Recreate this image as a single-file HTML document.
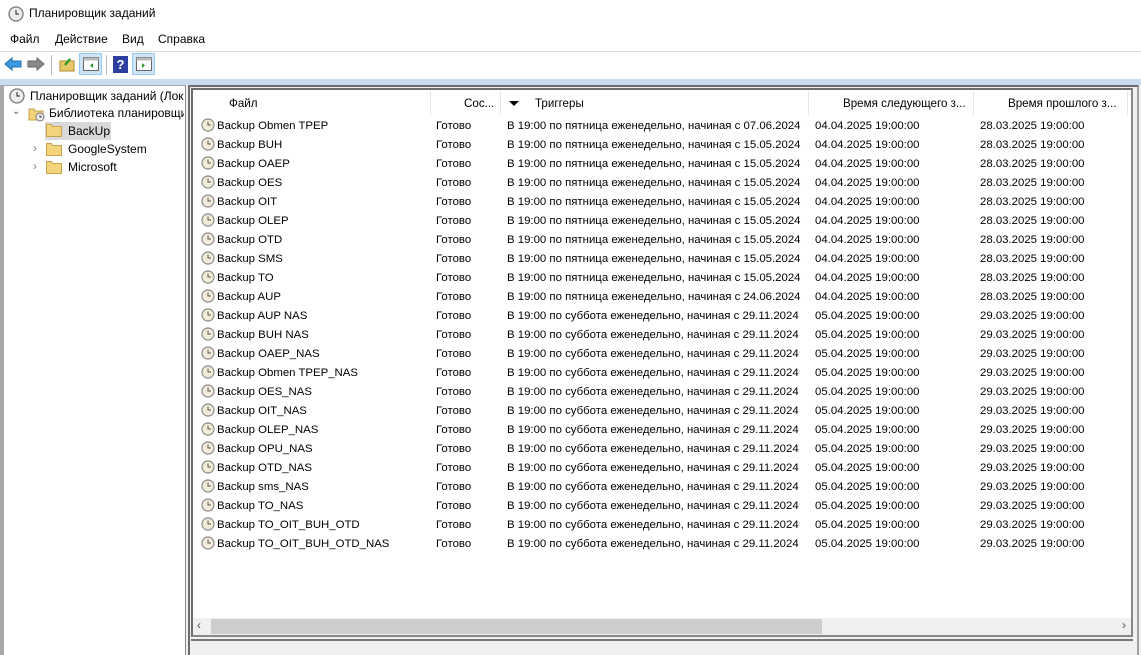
<!DOCTYPE html>
<html><head><meta charset="utf-8">
<style>
*{margin:0;padding:0;box-sizing:border-box}
body{width:1141px;height:655px;overflow:hidden;background:#fff;font-family:"Segoe UI","Liberation Sans",sans-serif;font-size:12px;color:#000;position:relative}
.a{position:absolute;white-space:nowrap}
.row{position:absolute;left:0;height:19px;width:940px}
.row span{position:absolute;top:4px;white-space:nowrap;font-size:11.4px}
.row svg{top:2px!important}
.hd span{position:absolute;top:6px;font-size:11.6px}
</style></head><body>
<svg class="a" style="left:8px;top:6px" width="16" height="16" viewBox="0 0 16 16"><circle cx="8" cy="8" r="7" fill="#eee" stroke="#777" stroke-width="1.3"/><path d="M8 4v4h3" stroke="#444" stroke-width="1.2" fill="none"/></svg>
<div class="a" style="left:29px;top:6px;font-size:12px">Планировщик заданий</div>
<div class="a" style="left:10px;top:32px">Файл</div>
<div class="a" style="left:55px;top:32px">Действие</div>
<div class="a" style="left:122px;top:32px">Вид</div>
<div class="a" style="left:158px;top:32px">Справка</div>
<div class="a" style="left:0;top:51px;width:1141px;height:1px;background:#dadada"></div>
<svg class="a" style="left:4px;top:56px" width="18" height="16" viewBox="0 0 18 16"><path d="M1 8l7-6v3h9v6H8v3z" fill="#3d9be0" stroke="#1e6fb5"/></svg>
<svg class="a" style="left:27px;top:56px" width="18" height="16" viewBox="0 0 18 16"><path d="M17 8l-7-6v3H1v6h9v3z" fill="#8a8a8a" stroke="#666"/></svg>
<div class="a" style="left:51px;top:55px;width:1px;height:20px;background:#bbb"></div>
<svg class="a" style="left:59px;top:56px" width="16" height="16" viewBox="0 0 16 16"><rect x="1" y="5" width="14" height="10" fill="#e8c766" stroke="#b08a30"/><path d="M6 9l5-6" stroke="#2a9a2a" stroke-width="2.5"/></svg>
<div class="a" style="left:79px;top:53px;width:23px;height:22px;background:#cce4f7;border:1px solid #99c9ef"></div>
<svg class="a" style="left:83px;top:57px" width="16" height="14" viewBox="0 0 16 14"><rect x=".5" y=".5" width="15" height="13" fill="#fff" stroke="#666"/><rect x=".5" y=".5" width="15" height="3" fill="#bbb"/><path d="M10 6v5l-3-2.5z" fill="#2a9a2a"/></svg>
<div class="a" style="left:106px;top:55px;width:1px;height:20px;background:#bbb"></div>
<div class="a" style="left:113px;top:56px;width:15px;height:17px;background:#2d3f9e;color:#fff;font-weight:bold;text-align:center;font-size:13px;line-height:17px">?</div>
<div class="a" style="left:132px;top:53px;width:23px;height:22px;background:#cce4f7;border:1px solid #99c9ef"></div>
<svg class="a" style="left:136px;top:57px" width="16" height="14" viewBox="0 0 16 14"><rect x=".5" y=".5" width="15" height="13" fill="#fff" stroke="#666"/><rect x=".5" y=".5" width="15" height="3" fill="#bbb"/><path d="M6 6v5l3-2.5z" fill="#2a9a2a"/></svg>
<div class="a" style="left:0;top:79px;width:1141px;height:6px;background:#c9dcf0"></div>
<div class="a" style="left:0;top:85px;width:1141px;height:570px;background:#f0f0f0"></div>
<div class="a" style="left:0;top:85px;width:186px;height:570px;background:#fff;border-left:4px solid #a8a8a8;border-right:1px solid #888;border-top:1px solid #a8a8a8"></div>
<svg class="a" style="left:9px;top:88px" width="16" height="16" viewBox="0 0 16 16"><circle cx="8" cy="8" r="7" fill="#eee" stroke="#777" stroke-width="1.3"/><path d="M8 4v4h3" stroke="#444" stroke-width="1.2" fill="none"/></svg>
<div class="a" style="left:30px;top:89px;width:154px;overflow:hidden">Планировщик заданий (Локальный)</div>
<div class="a" style="left:12px;top:106px;color:#555;font-size:10px">&#8964;</div>
<svg class="a" style="left:28px;top:106px" width="18" height="16" viewBox="0 0 18 16"><path d="M1 3h5l1 2h8v9H1z" fill="#f3d37b" stroke="#c9a24b"/><circle cx="12" cy="11" r="4" fill="#eee" stroke="#777"/><path d="M12 9v2h2" stroke="#444" fill="none"/></svg>
<div class="a" style="left:49px;top:106px;width:135px;overflow:hidden">Библиотека планировщика</div>
<div class="a" style="left:45px;top:122px;width:66px;height:18px;background:#d9d9d9"></div>
<svg class="a" style="left:46px;top:123px" width="16" height="14" viewBox="0 0 16 14"><path d="M.5 1.5h5l1 2h9v10H.5z" fill="#f3d37b" stroke="#c9a24b"/></svg>
<div class="a" style="left:68px;top:124px">BackUp</div>
<div class="a" style="left:33px;top:141px;color:#888">&#8250;</div>
<svg class="a" style="left:46px;top:142px" width="16" height="14" viewBox="0 0 16 14"><path d="M.5 1.5h5l1 2h9v10H.5z" fill="#f3d37b" stroke="#c9a24b"/></svg>
<div class="a" style="left:68px;top:142px">GoogleSystem</div>
<div class="a" style="left:33px;top:159px;color:#888">&#8250;</div>
<svg class="a" style="left:46px;top:160px" width="16" height="14" viewBox="0 0 16 14"><path d="M.5 1.5h5l1 2h9v10H.5z" fill="#f3d37b" stroke="#c9a24b"/></svg>
<div class="a" style="left:68px;top:160px">Microsoft</div>
<div class="a" style="left:188px;top:85px;width:951px;height:570px;border-left:2px solid #6d6d6d;border-top:2px solid #6d6d6d;border-right:2px solid #a0a0a0;background:#f0f0f0"></div>
<div class="a" style="left:191px;top:88px;width:942px;height:549px;background:#fff;border:2px solid #6d6d6d;border-right-color:#888;border-bottom-color:#888"></div>
<div class="a" style="left:191px;top:639px;width:942px;height:2px;background:#777"></div>
<div class="a hd" style="left:194px;top:91px;width:935px;height:24px;background:#fff">
<span style="left:35px">Файл</span>
<div class="a" style="left:236px;top:0;width:1px;height:24px;background:#e5e5e5"></div>
<span style="left:270px">Сос...</span>
<div class="a" style="left:306px;top:0;width:1px;height:24px;background:#e5e5e5"></div>
<div class="a" style="left:315px;top:10px;width:0;height:0;border-left:5px solid transparent;border-right:5px solid transparent;border-top:5px solid #000"></div>
<span style="left:341px">Триггеры</span>
<div class="a" style="left:614px;top:0;width:1px;height:24px;background:#e5e5e5"></div>
<span style="left:649px">Время следующего з...</span>
<div class="a" style="left:779px;top:0;width:1px;height:24px;background:#e5e5e5"></div>
<span style="left:814px">Время прошлого з...</span>
<div class="a" style="left:933px;top:0;width:1px;height:24px;background:#e5e5e5"></div>
</div>
<div class="a" style="left:194px;top:116px;width:935px;height:440px">
<div class="row" style="top:0"><svg class="a" style="left:7px;top:3px" width="14" height="14" viewBox="0 0 14 14"><circle cx="7" cy="7" r="6" fill="#f2ecd8" stroke="#888" stroke-width="1.2"/><path d="M7 3.5V7h3" stroke="#555" fill="none"/></svg><span style="left:23px">Backup Obmen TPEP</span><span style="left:242px">Готово</span><span style="left:313px">В 19:00 по пятница еженедельно, начиная с 07.06.2024</span><span style="left:621px">04.04.2025 19:00:00</span><span style="left:786px">28.03.2025 19:00:00</span></div>
<div class="row" style="top:19px"><svg class="a" style="left:7px;top:3px" width="14" height="14" viewBox="0 0 14 14"><circle cx="7" cy="7" r="6" fill="#f2ecd8" stroke="#888" stroke-width="1.2"/><path d="M7 3.5V7h3" stroke="#555" fill="none"/></svg><span style="left:23px">Backup BUH</span><span style="left:242px">Готово</span><span style="left:313px">В 19:00 по пятница еженедельно, начиная с 15.05.2024</span><span style="left:621px">04.04.2025 19:00:00</span><span style="left:786px">28.03.2025 19:00:00</span></div>
<div class="row" style="top:38px"><svg class="a" style="left:7px;top:3px" width="14" height="14" viewBox="0 0 14 14"><circle cx="7" cy="7" r="6" fill="#f2ecd8" stroke="#888" stroke-width="1.2"/><path d="M7 3.5V7h3" stroke="#555" fill="none"/></svg><span style="left:23px">Backup OAEP</span><span style="left:242px">Готово</span><span style="left:313px">В 19:00 по пятница еженедельно, начиная с 15.05.2024</span><span style="left:621px">04.04.2025 19:00:00</span><span style="left:786px">28.03.2025 19:00:00</span></div>
<div class="row" style="top:57px"><svg class="a" style="left:7px;top:3px" width="14" height="14" viewBox="0 0 14 14"><circle cx="7" cy="7" r="6" fill="#f2ecd8" stroke="#888" stroke-width="1.2"/><path d="M7 3.5V7h3" stroke="#555" fill="none"/></svg><span style="left:23px">Backup OES</span><span style="left:242px">Готово</span><span style="left:313px">В 19:00 по пятница еженедельно, начиная с 15.05.2024</span><span style="left:621px">04.04.2025 19:00:00</span><span style="left:786px">28.03.2025 19:00:00</span></div>
<div class="row" style="top:76px"><svg class="a" style="left:7px;top:3px" width="14" height="14" viewBox="0 0 14 14"><circle cx="7" cy="7" r="6" fill="#f2ecd8" stroke="#888" stroke-width="1.2"/><path d="M7 3.5V7h3" stroke="#555" fill="none"/></svg><span style="left:23px">Backup OIT</span><span style="left:242px">Готово</span><span style="left:313px">В 19:00 по пятница еженедельно, начиная с 15.05.2024</span><span style="left:621px">04.04.2025 19:00:00</span><span style="left:786px">28.03.2025 19:00:00</span></div>
<div class="row" style="top:95px"><svg class="a" style="left:7px;top:3px" width="14" height="14" viewBox="0 0 14 14"><circle cx="7" cy="7" r="6" fill="#f2ecd8" stroke="#888" stroke-width="1.2"/><path d="M7 3.5V7h3" stroke="#555" fill="none"/></svg><span style="left:23px">Backup OLEP</span><span style="left:242px">Готово</span><span style="left:313px">В 19:00 по пятница еженедельно, начиная с 15.05.2024</span><span style="left:621px">04.04.2025 19:00:00</span><span style="left:786px">28.03.2025 19:00:00</span></div>
<div class="row" style="top:114px"><svg class="a" style="left:7px;top:3px" width="14" height="14" viewBox="0 0 14 14"><circle cx="7" cy="7" r="6" fill="#f2ecd8" stroke="#888" stroke-width="1.2"/><path d="M7 3.5V7h3" stroke="#555" fill="none"/></svg><span style="left:23px">Backup OTD</span><span style="left:242px">Готово</span><span style="left:313px">В 19:00 по пятница еженедельно, начиная с 15.05.2024</span><span style="left:621px">04.04.2025 19:00:00</span><span style="left:786px">28.03.2025 19:00:00</span></div>
<div class="row" style="top:133px"><svg class="a" style="left:7px;top:3px" width="14" height="14" viewBox="0 0 14 14"><circle cx="7" cy="7" r="6" fill="#f2ecd8" stroke="#888" stroke-width="1.2"/><path d="M7 3.5V7h3" stroke="#555" fill="none"/></svg><span style="left:23px">Backup SMS</span><span style="left:242px">Готово</span><span style="left:313px">В 19:00 по пятница еженедельно, начиная с 15.05.2024</span><span style="left:621px">04.04.2025 19:00:00</span><span style="left:786px">28.03.2025 19:00:00</span></div>
<div class="row" style="top:152px"><svg class="a" style="left:7px;top:3px" width="14" height="14" viewBox="0 0 14 14"><circle cx="7" cy="7" r="6" fill="#f2ecd8" stroke="#888" stroke-width="1.2"/><path d="M7 3.5V7h3" stroke="#555" fill="none"/></svg><span style="left:23px">Backup TO</span><span style="left:242px">Готово</span><span style="left:313px">В 19:00 по пятница еженедельно, начиная с 15.05.2024</span><span style="left:621px">04.04.2025 19:00:00</span><span style="left:786px">28.03.2025 19:00:00</span></div>
<div class="row" style="top:171px"><svg class="a" style="left:7px;top:3px" width="14" height="14" viewBox="0 0 14 14"><circle cx="7" cy="7" r="6" fill="#f2ecd8" stroke="#888" stroke-width="1.2"/><path d="M7 3.5V7h3" stroke="#555" fill="none"/></svg><span style="left:23px">Backup AUP</span><span style="left:242px">Готово</span><span style="left:313px">В 19:00 по пятница еженедельно, начиная с 24.06.2024</span><span style="left:621px">04.04.2025 19:00:00</span><span style="left:786px">28.03.2025 19:00:00</span></div>
<div class="row" style="top:190px"><svg class="a" style="left:7px;top:3px" width="14" height="14" viewBox="0 0 14 14"><circle cx="7" cy="7" r="6" fill="#f2ecd8" stroke="#888" stroke-width="1.2"/><path d="M7 3.5V7h3" stroke="#555" fill="none"/></svg><span style="left:23px">Backup AUP NAS</span><span style="left:242px">Готово</span><span style="left:313px">В 19:00 по суббота еженедельно, начиная с 29.11.2024</span><span style="left:621px">05.04.2025 19:00:00</span><span style="left:786px">29.03.2025 19:00:00</span></div>
<div class="row" style="top:209px"><svg class="a" style="left:7px;top:3px" width="14" height="14" viewBox="0 0 14 14"><circle cx="7" cy="7" r="6" fill="#f2ecd8" stroke="#888" stroke-width="1.2"/><path d="M7 3.5V7h3" stroke="#555" fill="none"/></svg><span style="left:23px">Backup BUH NAS</span><span style="left:242px">Готово</span><span style="left:313px">В 19:00 по суббота еженедельно, начиная с 29.11.2024</span><span style="left:621px">05.04.2025 19:00:00</span><span style="left:786px">29.03.2025 19:00:00</span></div>
<div class="row" style="top:228px"><svg class="a" style="left:7px;top:3px" width="14" height="14" viewBox="0 0 14 14"><circle cx="7" cy="7" r="6" fill="#f2ecd8" stroke="#888" stroke-width="1.2"/><path d="M7 3.5V7h3" stroke="#555" fill="none"/></svg><span style="left:23px">Backup OAEP_NAS</span><span style="left:242px">Готово</span><span style="left:313px">В 19:00 по суббота еженедельно, начиная с 29.11.2024</span><span style="left:621px">05.04.2025 19:00:00</span><span style="left:786px">29.03.2025 19:00:00</span></div>
<div class="row" style="top:247px"><svg class="a" style="left:7px;top:3px" width="14" height="14" viewBox="0 0 14 14"><circle cx="7" cy="7" r="6" fill="#f2ecd8" stroke="#888" stroke-width="1.2"/><path d="M7 3.5V7h3" stroke="#555" fill="none"/></svg><span style="left:23px">Backup Obmen TPEP_NAS</span><span style="left:242px">Готово</span><span style="left:313px">В 19:00 по суббота еженедельно, начиная с 29.11.2024</span><span style="left:621px">05.04.2025 19:00:00</span><span style="left:786px">29.03.2025 19:00:00</span></div>
<div class="row" style="top:266px"><svg class="a" style="left:7px;top:3px" width="14" height="14" viewBox="0 0 14 14"><circle cx="7" cy="7" r="6" fill="#f2ecd8" stroke="#888" stroke-width="1.2"/><path d="M7 3.5V7h3" stroke="#555" fill="none"/></svg><span style="left:23px">Backup OES_NAS</span><span style="left:242px">Готово</span><span style="left:313px">В 19:00 по суббота еженедельно, начиная с 29.11.2024</span><span style="left:621px">05.04.2025 19:00:00</span><span style="left:786px">29.03.2025 19:00:00</span></div>
<div class="row" style="top:285px"><svg class="a" style="left:7px;top:3px" width="14" height="14" viewBox="0 0 14 14"><circle cx="7" cy="7" r="6" fill="#f2ecd8" stroke="#888" stroke-width="1.2"/><path d="M7 3.5V7h3" stroke="#555" fill="none"/></svg><span style="left:23px">Backup OIT_NAS</span><span style="left:242px">Готово</span><span style="left:313px">В 19:00 по суббота еженедельно, начиная с 29.11.2024</span><span style="left:621px">05.04.2025 19:00:00</span><span style="left:786px">29.03.2025 19:00:00</span></div>
<div class="row" style="top:304px"><svg class="a" style="left:7px;top:3px" width="14" height="14" viewBox="0 0 14 14"><circle cx="7" cy="7" r="6" fill="#f2ecd8" stroke="#888" stroke-width="1.2"/><path d="M7 3.5V7h3" stroke="#555" fill="none"/></svg><span style="left:23px">Backup OLEP_NAS</span><span style="left:242px">Готово</span><span style="left:313px">В 19:00 по суббота еженедельно, начиная с 29.11.2024</span><span style="left:621px">05.04.2025 19:00:00</span><span style="left:786px">29.03.2025 19:00:00</span></div>
<div class="row" style="top:323px"><svg class="a" style="left:7px;top:3px" width="14" height="14" viewBox="0 0 14 14"><circle cx="7" cy="7" r="6" fill="#f2ecd8" stroke="#888" stroke-width="1.2"/><path d="M7 3.5V7h3" stroke="#555" fill="none"/></svg><span style="left:23px">Backup OPU_NAS</span><span style="left:242px">Готово</span><span style="left:313px">В 19:00 по суббота еженедельно, начиная с 29.11.2024</span><span style="left:621px">05.04.2025 19:00:00</span><span style="left:786px">29.03.2025 19:00:00</span></div>
<div class="row" style="top:342px"><svg class="a" style="left:7px;top:3px" width="14" height="14" viewBox="0 0 14 14"><circle cx="7" cy="7" r="6" fill="#f2ecd8" stroke="#888" stroke-width="1.2"/><path d="M7 3.5V7h3" stroke="#555" fill="none"/></svg><span style="left:23px">Backup OTD_NAS</span><span style="left:242px">Готово</span><span style="left:313px">В 19:00 по суббота еженедельно, начиная с 29.11.2024</span><span style="left:621px">05.04.2025 19:00:00</span><span style="left:786px">29.03.2025 19:00:00</span></div>
<div class="row" style="top:361px"><svg class="a" style="left:7px;top:3px" width="14" height="14" viewBox="0 0 14 14"><circle cx="7" cy="7" r="6" fill="#f2ecd8" stroke="#888" stroke-width="1.2"/><path d="M7 3.5V7h3" stroke="#555" fill="none"/></svg><span style="left:23px">Backup sms_NAS</span><span style="left:242px">Готово</span><span style="left:313px">В 19:00 по суббота еженедельно, начиная с 29.11.2024</span><span style="left:621px">05.04.2025 19:00:00</span><span style="left:786px">29.03.2025 19:00:00</span></div>
<div class="row" style="top:380px"><svg class="a" style="left:7px;top:3px" width="14" height="14" viewBox="0 0 14 14"><circle cx="7" cy="7" r="6" fill="#f2ecd8" stroke="#888" stroke-width="1.2"/><path d="M7 3.5V7h3" stroke="#555" fill="none"/></svg><span style="left:23px">Backup TO_NAS</span><span style="left:242px">Готово</span><span style="left:313px">В 19:00 по суббота еженедельно, начиная с 29.11.2024</span><span style="left:621px">05.04.2025 19:00:00</span><span style="left:786px">29.03.2025 19:00:00</span></div>
<div class="row" style="top:399px"><svg class="a" style="left:7px;top:3px" width="14" height="14" viewBox="0 0 14 14"><circle cx="7" cy="7" r="6" fill="#f2ecd8" stroke="#888" stroke-width="1.2"/><path d="M7 3.5V7h3" stroke="#555" fill="none"/></svg><span style="left:23px">Backup TO_OIT_BUH_OTD</span><span style="left:242px">Готово</span><span style="left:313px">В 19:00 по суббота еженедельно, начиная с 29.11.2024</span><span style="left:621px">05.04.2025 19:00:00</span><span style="left:786px">29.03.2025 19:00:00</span></div>
<div class="row" style="top:418px"><svg class="a" style="left:7px;top:3px" width="14" height="14" viewBox="0 0 14 14"><circle cx="7" cy="7" r="6" fill="#f2ecd8" stroke="#888" stroke-width="1.2"/><path d="M7 3.5V7h3" stroke="#555" fill="none"/></svg><span style="left:23px">Backup TO_OIT_BUH_OTD_NAS</span><span style="left:242px">Готово</span><span style="left:313px">В 19:00 по суббота еженедельно, начиная с 29.11.2024</span><span style="left:621px">05.04.2025 19:00:00</span><span style="left:786px">29.03.2025 19:00:00</span></div>
</div>
<div class="a" style="left:193px;top:618px;width:938px;height:17px;background:#f0f0f0"></div>
<div class="a" style="left:197px;top:618px;color:#555;font-size:12px">&#8249;</div>
<div class="a" style="left:1122px;top:618px;color:#555;font-size:12px">&#8250;</div>
<div class="a" style="left:211px;top:619px;width:611px;height:15px;background:#cdcdcd"></div>
</body></html>
